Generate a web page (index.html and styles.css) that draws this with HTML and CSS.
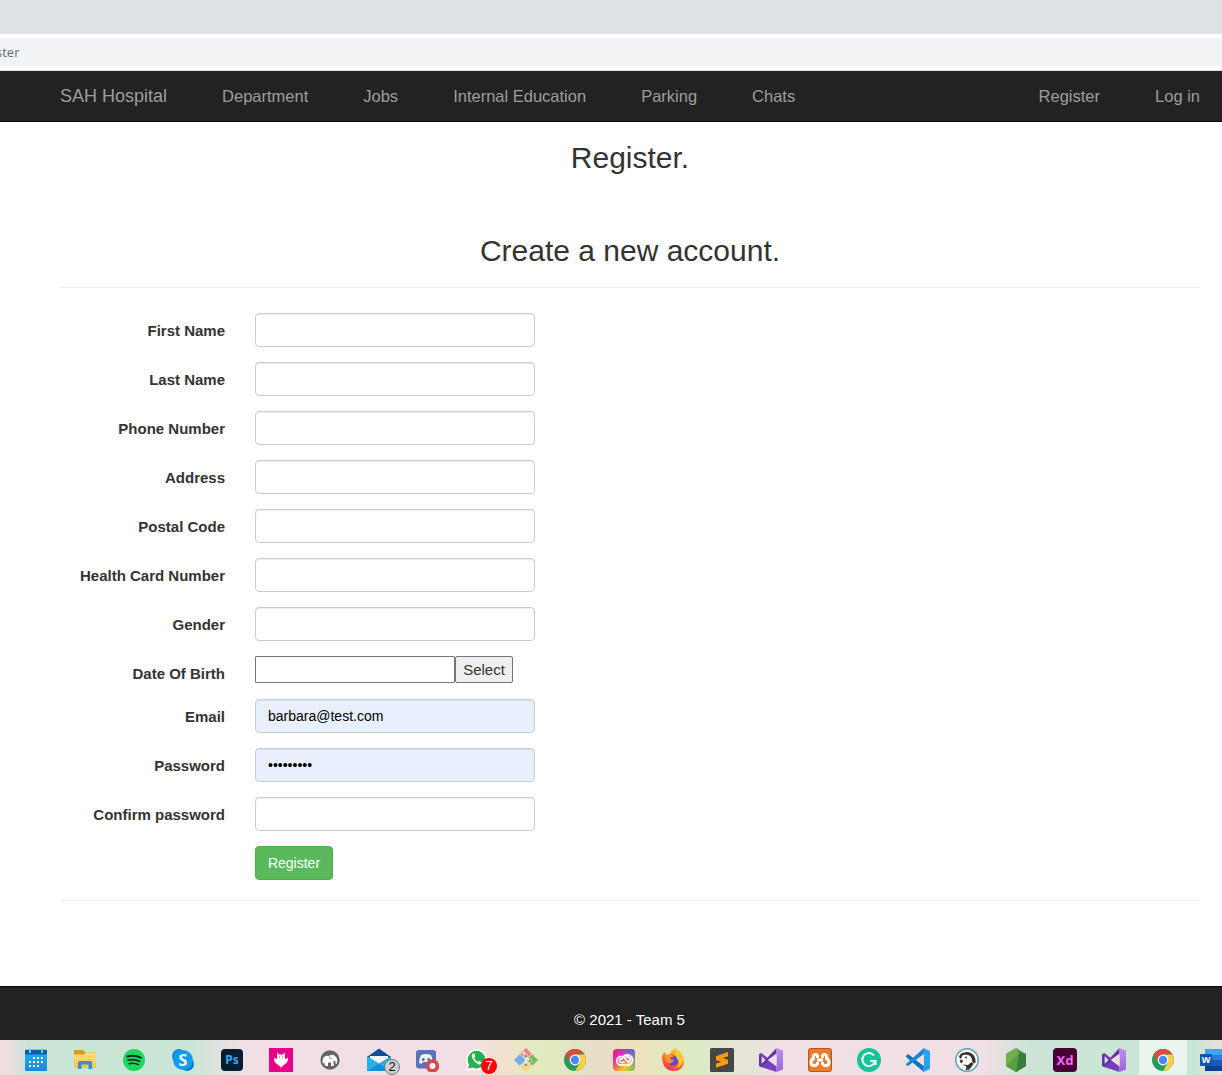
FILE: index.html
```html
<!DOCTYPE html>
<html lang="en">
<head>
<meta charset="utf-8">
<title>Register</title>
<link rel="stylesheet" href="styles.css">
</head>
<body>
<div class="tab-strip"></div>
<div class="toolbar"><div class="address">ster</div></div>
<nav class="navbar">
  <a class="brand">SAH Hospital</a>
  <a>Department</a><a>Jobs</a><a>Internal Education</a><a>Parking</a><a>Chats</a>
  <a class="push">Register</a><a>Log in</a>
</nav>
<main class="content">
  <h2 class="title">Register.</h2>
  <h2 class="subtitle">Create a new account.</h2>
  <hr class="rule">
  <form class="form">
    <label class="row"><span class="name">First Name</span><input class="field" type="text"></label>
    <label class="row"><span class="name">Last Name</span><input class="field" type="text"></label>
    <label class="row"><span class="name">Phone Number</span><input class="field" type="text"></label>
    <label class="row"><span class="name">Address</span><input class="field" type="text"></label>
    <label class="row"><span class="name">Postal Code</span><input class="field" type="text"></label>
    <label class="row"><span class="name">Health Card Number</span><input class="field" type="text"></label>
    <label class="row"><span class="name">Gender</span><input class="field" type="text"></label>
    <div class="row date-row"><span class="name">Date Of Birth</span><input class="date" type="text"><button class="select" type="button">Select</button></div>
    <label class="row"><span class="name">Email</span><input class="field filled" type="text" value="barbara@test.com"></label>
    <label class="row"><span class="name">Password</span><input class="field filled" type="password" value="password1"></label>
    <label class="row"><span class="name">Confirm password</span><input class="field" type="password"></label>
    <div class="row"><span class="name"></span><button class="submit" type="button">Register</button></div>
  </form>
  <hr class="rule end">
</main>
<footer class="footer">© 2021 - Team 5</footer>
<svg class="defs" width="0" height="0">
  <defs>
    <linearGradient id="sky" x2="0" y2="1"><stop stop-color="#28b1ef"/><stop offset="1" stop-color="#1688e0"/></linearGradient>
    <linearGradient id="folder" x2="0" y2="1"><stop stop-color="#ffe07b"/><stop offset="1" stop-color="#fbc544"/></linearGradient>
    <linearGradient id="rainbow" x2="1" y2="1"><stop stop-color="#ff1730"/><stop offset=".25" stop-color="#f020bd"/><stop offset=".48" stop-color="#ed704e"/><stop offset=".7" stop-color="#f5c82c"/><stop offset="1" stop-color="#4fc66c"/></linearGradient>
    <linearGradient id="blueside" x1="1" x2="0" y1="0" y2="1"><stop stop-color="#2867ff"/><stop offset=".55" stop-color="#8a49e4" stop-opacity="0"/></linearGradient>
    <linearGradient id="fox" x1=".8" y1="0" x2=".3" y2="1"><stop stop-color="#ffe13b"/><stop offset=".45" stop-color="#ff8b20"/><stop offset="1" stop-color="#f52b61"/></linearGradient>
    <linearGradient id="violet" x2="0" y2="1"><stop stop-color="#c18cf5"/><stop offset="1" stop-color="#9b65d9"/></linearGradient>
    <symbol id="chrome" viewBox="0 0 24 24">
      <circle cx="12" cy="12" r="11" fill="#249b5c"/>
      <path d="M2.5 6.5A11 11 0 0 1 21.5 6.5H12L7.2 14.8Z" fill="#d84b3e"/>
      <path d="M12 6.5H21.5A11 11 0 0 1 12 23L16.8 14.7Z" fill="#fbcf48"/>
      <circle cx="12" cy="12" r="5.4" fill="#fff"/><circle cx="12" cy="12" r="4.2" fill="#468af5"/>
    </symbol>
    <symbol id="vs" viewBox="0 0 24 24">
      <path d="M0 6 2.5 5 17.5 17V24L1.2 18.8 0 17.7Z" fill="#7641b8"/>
      <path d="M0 17.7V6L2.7 8.2V15.7L17.5 0V7L2.5 19Z" fill="#6336a5"/>
      <path d="M17.5 0 24 2.4V21.5L17.5 24Z" fill="url(#violet)"/>
      <path d="M8.8 12 17.5 5.6V18.4Z" fill="#e9e0e7"/><path d="M2.7 8.2 6.3 12 2.7 15.7Z" fill="#e9e0e7"/>
    </symbol>
  </defs>
</svg>
<div class="taskbar">
  <div class="task"><svg viewBox="0 0 24 24"><rect x="1" y="1.5" width="22" height="21.5" rx="1" fill="url(#sky)"/><path d="M1 2h22v4.5H1z" fill="#0c5da9"/><path d="M6 1v4M18 1v4" stroke="#5bd2ec" stroke-width="2"/><path d="M9 10h10M5 14h14M5 18h10" stroke="#fff" stroke-width="2" stroke-dasharray="2 2"/></svg></div>
  <div class="task"><svg viewBox="0 0 24 24"><path d="M1 3q0-1 1-1h8l2 2.500h11v6H1z" fill="#d99a13"/><path d="M1 6.500h10l2-2h9q1 0 1 1V20H1z" fill="url(#folder)"/><path d="M5 21V14.500q0-1.500 2-1.500h10q2 0 2 1.500V21h-3.500v-4.500h-7V21z" fill="#438cca"/></svg></div>
  <div class="task"><svg viewBox="0 0 24 24"><circle cx="12" cy="12" r="11" fill="#1ed760"/><g fill="none" stroke="#10291b" stroke-linecap="round"><path d="M5.500 8.500Q12 6.500 18.800 9.600" stroke-width="2.1"/><path d="M6.200 12.200Q12 10.600 17.600 13.200" stroke-width="1.8"/><path d="M7 15.700Q12 14.300 16.500 16.700" stroke-width="1.5"/></g></svg></div>
  <div class="task"><svg viewBox="0 0 24 24"><circle cx="8" cy="8" r="7" fill="#138ce1"/><circle cx="16" cy="16" r="7" fill="#0b78d4"/><circle cx="12" cy="12" r="10" fill="#129de9"/><text x="12" y="17.600" class="glyph skype">S</text></svg></div>
  <div class="task"><svg viewBox="0 0 24 24"><rect x="1" y="1" width="22" height="22" rx="4" fill="#071d32"/><text x="12" y="15.600" class="glyph ps">Ps</text></svg></div>
  <div class="task"><svg viewBox="0 0 24 24"><path d="M0 0h24v24H0z" fill="#e90089"/><path d="M8 4.500 10.200 6.500h3.600L16 4.500v5q.4 1 .2 2L19 9.500q.4 5-3.600 7L12 19.500l-3.400-3Q4.600 14.500 5 9.500l2.800 2q-.2-1 .2-2Z" fill="#fff"/><path d="M10 9h.9M13.200 9h.9" stroke="#e90089"/></svg></div>
  <div class="task"><svg viewBox="0 0 24 24"><circle cx="12" cy="12" r="10.200" fill="#e9e9e7"/><circle cx="12" cy="12" r="9.700" fill="#656663"/><path d="M4.800 15q-.8-4 1.200-6 2-2 5-1 3-2.500 6 0 3 2 2 7l-1 1.500-1-4-1.700 1 .7 4.500h-3v-3.500h-3V18H7l-.8-4.500-.7 2.500Z" fill="#fff"/><path d="M11 8q.500 3.500 3.500 3" fill="none" stroke="#656663" stroke-width=".6"/></svg></div>
  <div class="task"><svg viewBox="0 0 24 24"><path d="M0 9 12 .5 24 9v8H0Z" fill="#0a4f98"/><path d="M3 8h18v8H3z" fill="#f3f8fa"/><path d="M0 8 12 15.500 24 8v15H0Z" fill="#28afe9"/><path d="M0 23 12 15.500 24 23Z" fill="#168fd8"/></svg><span class="badge mail">2</span></div>
  <div class="task"><svg viewBox="0 0 24 24"><rect x="0" y="2" width="20" height="18.500" rx="3" fill="#5873b7"/><path d="M5 7q5-2 10 0 2 4 2 8-3 2-4-1H7q-1 3-4 1 0-4 2-8Z" fill="#f3f2f7"/><circle cx="7.300" cy="11.500" r="1.500" fill="#5873b7"/><circle cx="12.700" cy="11.500" r="1.500" fill="#5873b7"/><circle cx="16.500" cy="18" r="6.700" fill="#db4848"/><circle cx="16.500" cy="18" r="3" fill="#fff"/></svg></div>
  <div class="task"><svg viewBox="0 0 24 24"><path d="M1 23 2.300 17A10.700 10.700 0 1 1 7 21.500Z" fill="#fff"/><path d="M3 20.500 4.200 16.500A8.800 8.800 0 1 1 7.600 19.500Z" fill="#22b34b"/><path d="M8 5.500 6.700 7.800Q8 14.300 14.500 16.700l2.700-2-3-2-1.500 1.200Q10 12.500 9.200 10l1.200-1.400-1-3Z" fill="#fff"/></svg><span class="badge chat">7</span></div>
  <div class="task"><svg viewBox="0 0 24 24"><path d="M12 0 17.700 5.700 12 11.400 6.300 5.700Z" fill="#ef8283"/><path d="M5.700 6.300 11.400 12 5.700 17.700 0 12Z" fill="#75aaf3"/><path d="M18.300 6.300 24 12 18.300 17.700 12.600 12Z" fill="#77bd57"/><path d="M12 12.600 17.700 18.300 12 24 6.300 18.300Z" fill="#f6d676"/><path d="M9 4 12 8v10M12 9l4 4" fill="none" stroke="#eee9df" stroke-width="2.200"/><g fill="#8b8b79" stroke="#eee9df" stroke-width=".8"><circle cx="12" cy="8" r="1.900"/><circle cx="12" cy="17" r="1.900"/><circle cx="16" cy="13" r="1.900"/></g></svg></div>
  <div class="task"><svg><use href="#chrome"/></svg></div>
  <div class="task"><svg viewBox="0 0 24 24"><rect x="1" y="1" width="22" height="22" rx="4" fill="url(#rainbow)"/><rect x="1" y="1" width="22" height="22" rx="4" fill="url(#blueside)"/><g fill="none" stroke="#fff" stroke-width="1.700"><path d="M9 17.200H15.500A5.200 5.200 0 1 0 10.800 9.500M9 17.200A4.300 4.300 0 1 1 12.200 10l4 4"/><path d="M12.500 14.300H9.200A1.700 1.700 0 1 1 10.500 11.600M13 10.500A2.700 2.700 0 1 1 15.500 14.400"/></g></svg></div>
  <div class="task"><svg viewBox="0 0 24 24"><path d="M1 8Q2 5 4 4l1 3 4-1Q10 2 14 0q1 5 5 7 3 2 4 6Q23 23 12 23 1 22 1 8Z" fill="url(#fox)"/><circle cx="12" cy="12.500" r="5.300" fill="#6847c9"/><path d="M5 7q5-1 8 2-4 0-4 2l4 1q-2 4-6 3l-3-4Z" fill="#ff9324"/><path d="M14 0q8 4 9 12-3 7-8 8 5-4 2-8-4-5-3-12Z" fill="#ffc830"/></svg></div>
  <div class="task"><svg viewBox="0 0 24 24"><rect width="24" height="24" rx="1.500" fill="#464646"/><path d="M6 8.200 18 4v4.300L12.500 10 18 11.700v4.100L6 19.800v-4.200l5.500-1.800L6 12.200Z" fill="#ff9a0c"/></svg></div>
  <div class="task"><svg><use href="#vs"/></svg></div>
  <div class="task"><svg viewBox="0 0 24 24"><rect x=".5" y=".5" width="23" height="23" rx="2" fill="#ed7b2c" stroke="#ba5514"/><path d="M9 12H15M9.500 10V7.500A2.300 2.300 0 1 0 6.500 10.800A3.400 3.400 0 1 0 9.500 15.500V14M14.500 10V7.500A2.300 2.300 0 1 1 17.500 10.800A3.400 3.400 0 1 1 14.500 15.500V14" fill="none" stroke="#fff" stroke-width="3"/></svg></div>
  <div class="task"><svg viewBox="0 0 24 24"><circle cx="12" cy="12" r="12" fill="#16c39a"/><path d="M17 7.500A6.500 6.500 0 1 0 18.200 13M13 13h5.500v4" fill="none" stroke="#fff" stroke-width="2"/></svg></div>
  <div class="task"><svg viewBox="0 0 24 24"><path d="M0 8 2 6 18 18v6L0 9Z" fill="#0876be"/><path d="M0 16 18 0v6L2 18 0 17Z" fill="#1389d1"/><path d="M17.500 0 24 3v18l-6.500 3Z" fill="#27a4ef"/><path d="M10 12l8-6v12Z" fill="#eee0e5"/></svg></div>
  <div class="task"><svg viewBox="0 0 24 24"><circle cx="12" cy="12" r="11.200" fill="#fff" stroke="#55a7b5" stroke-width="1.500"/><path d="M4 9Q5 5 9 4.500q5-1.500 9 2 3 3 2.500 8l-2.500 1-1.500-5Q13 6 8 7L5.500 11Z" fill="#3b302c"/><path d="M7.500 8q5-3 8.500 1l1 6-5 2-5-2Z" fill="#fff"/><path d="M4.500 12.500 7 11.500l1 2-2 2Z" fill="#3b302c"/><path d="M7.500 16.500 13 17l3.500-3 2 2-4 5.500-4 .5 1-3.500Z" fill="#3b302c"/><circle cx="11" cy="9.500" r="1" fill="#3b302c"/></svg></div>
  <div class="task"><svg viewBox="0 0 24 24"><path d="M12 0 22 6v12l-10 6-10-6V6Z" fill="#519442"/><path d="M12 0 2 6v12L15 5Z" fill="#73b04d"/><path d="M15 5 22 6v12L12 24Z" fill="#397d3c"/><path d="M15 5 2 18l10 6Z" fill="#5b9f42"/></svg></div>
  <div class="task"><svg viewBox="0 0 24 24"><rect width="24" height="24" rx="4" fill="#470137"/><text x="12" y="17" class="glyph xd">Xd</text></svg></div>
  <div class="task"><svg><use href="#vs"/></svg></div>
  <div class="task active"><svg><use href="#chrome"/></svg></div>
  <div class="task"><svg viewBox="0 0 24 24"><path d="M5 1h19v6H5z" fill="#41a5ee"/><path d="M5 7h19v5H5z" fill="#2b7cd3"/><path d="M5 12h19v6H5z" fill="#185abd"/><path d="M5 18h19v5H5z" fill="#103f91"/><rect y="6" width="12" height="12" rx="1" fill="#1455b3"/><text x="6" y="15.300" class="glyph word">W</text></svg></div>
</div>
</body>
</html>
```

FILE: styles.css
```css
* { box-sizing: border-box; }
body {
  margin: 0;
  height: 1075px;
  overflow: hidden;
  display: flex;
  flex-direction: column;
  font: 15px/21px "Liberation Sans", Arial, sans-serif;
  color: #333;
  background: #fff;
}
.tab-strip { height: 34px; background: #dee1e6; }
.toolbar { height: 37px; padding: 4px 0; border-bottom: 1px solid #d9dadc; }
.address {
  height: 28px;
  background: #f1f3f4;
  color: #6a6e72;
  font: 13px/29px "Open Sans", "Noto Sans", sans-serif;
  text-indent: -4px;
}
.navbar {
  height: 51px;
  padding: 0 22px 0 60px;
  display: flex;
  gap: 55px;
  background: #222;
  border-bottom: 1px solid #080808;
  color: #9d9d9d;
  font-size: 16.5px;
  line-height: 50px;
}
.brand { font-size: 18px; }
.push { margin-left: auto; }
.content { height: 864px; padding: 0 22px 0 60px; }
.title, .subtitle {
  margin: 0;
  font-size: 30px;
  font-weight: 400;
  line-height: 33px;
  text-align: center;
}
.title { padding-top: 19px; }
.subtitle { padding-top: 60px; }
.rule { margin: 20px 0 25px; border: 0; border-top: 1px solid #eee; }
.end { margin: 20px 0 0; }
.form { display: flex; flex-direction: column; gap: 15px; }
.row { display: flex; height: 34px; }
.date-row { height: 28px; }
.name {
  width: 165px;
  margin-right: 30px;
  padding-top: 7px;
  text-align: right;
  font-weight: 700;
}
.field {
  width: 280px;
  height: 34px;
  padding: 6px 12px;
  border: 1px solid #ccc;
  border-radius: 4px;
  box-shadow: inset 0 1px 1px rgba(0, 0, 0, .075);
  background: #fff;
  color: #000;
  font: 14px "Liberation Sans", Arial, sans-serif;
}
.filled { background: #e8f0fe; }
.date { width: 200px; height: 27px; border: 1px solid #767676; border-radius: 1px; }
.select {
  width: 58px;
  height: 27px;
  padding: 0;
  border: 1px solid #767676;
  border-radius: 2px;
  background: #efefef;
  color: #333;
  font: 15px "Liberation Sans", Arial, sans-serif;
}
.submit {
  width: 78px;
  height: 34px;
  padding: 0;
  border: 1px solid #4cae4c;
  border-radius: 4px;
  background: #5cb85c;
  color: #fff;
  font: 14px "Liberation Sans", Arial, sans-serif;
}
.footer {
  height: 54px;
  padding: 22px 0 0 37px;
  border-top: 1px solid #080808;
  background: #222;
  color: #fff;
  text-align: center;
}
.defs { position: absolute; }
.taskbar {
  height: 35px;
  padding-left: 12px;
  display: flex;
  background: linear-gradient(90deg, #efdde0 0, #efdde0 10px, #cbe4d6 28px, #cae6d6 190px, #f1dfe5 240px, #f2dfe5 470px, #f0e2cd 505px, #dfebbe 545px, #e8ddc9 600px, #ede1bc 635px, #dcebc3 690px, #e0e7d0 725px, #f0dfe4 780px, #f1dfe5 985px, #cce4d7 1030px, #cae6d6 1195px, #eadedd 1222px);
}
.task {
  position: relative;
  flex: 0 0 49px;
  height: 35px;
  padding: 8px 12px 0;
}
.task svg { display: block; width: 24px; height: 24px; }
.active { background: linear-gradient(90deg, #eaf4ef 48px, transparent 48px); }
.badge {
  position: absolute;
  width: 16px;
  height: 16px;
  border-radius: 50%;
  font-size: 13px;
  line-height: 16px;
  text-align: center;
}
.mail { left: 29px; top: 19px; border: 1px solid #777; background: #ccd0d3; color: #111; line-height: 14px; }
.chat { left: 28px; top: 18px; background: #f00; color: #fff; }
.glyph { font-family: "Noto Sans", "Open Sans", sans-serif; font-weight: 700; text-anchor: middle; fill: #fff; }
.skype { font-size: 16px; }
.ps { font-size: 12px; fill: #31a8ff; }
.xd { font-size: 13px; fill: #ff61f6; }
.word { font-size: 9px; }
```
